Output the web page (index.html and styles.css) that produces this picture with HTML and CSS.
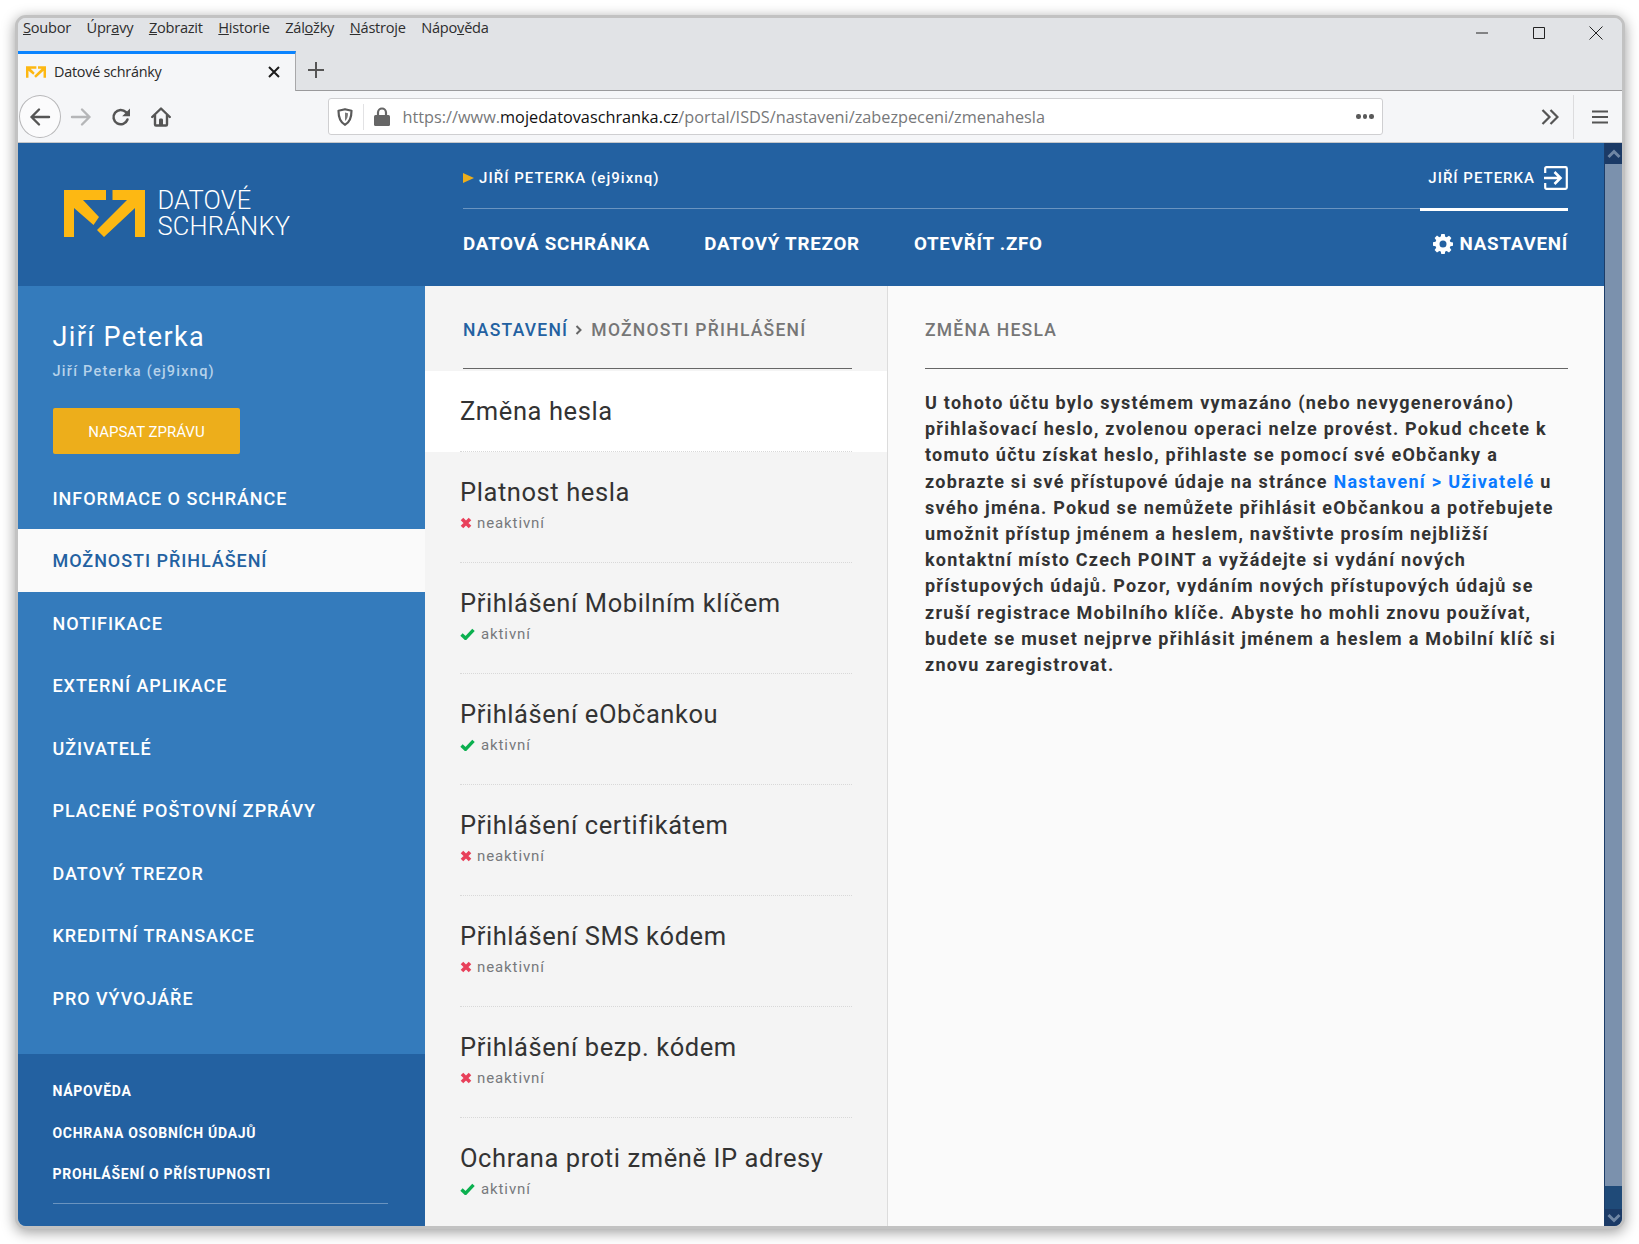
FILE: index.html
```html
<!DOCTYPE html>
<html lang="cs">
<head>
<meta charset="utf-8">
<title>Datové schránky</title>
<link rel="stylesheet" href="styles.css">
</head>
<body>
<div class="window">
  <div class="menubar">
    <nav class="menus">
      <span><u>S</u>oubor</span><span>Úpr<u>a</u>vy</span><span><u>Z</u>obrazit</span><span><u>H</u>istorie</span><span>Zál<u>o</u>žky</span><span><u>N</u>ástroje</span><span>Nápo<u>v</u>ěda</span>
    </nav>
    <div class="winctl">
      <svg width="14" height="14" viewBox="0 0 14 14"><path d="M1 7h12" stroke="#222" fill="none"/></svg>
      <svg width="14" height="14" viewBox="0 0 14 14"><path d="M1.500 1.500h11v11h-11z" stroke="#222" fill="none"/></svg>
      <svg width="14" height="14" viewBox="0 0 14 14"><path d="M.5.5l13 13M13.500.5l-13 13" stroke="#222" fill="none"/></svg>
    </div>
  </div>
  <div class="tabstrip">
    <div class="tab">
      <svg class="favicon" width="20" height="14" viewBox="0 0 81 47"><path d="M0 0H42V10H19L35 27 29.500 35 10 18V47H0ZM48.500 0H81V47H71V18L40 47 33 40 63 10H48.500Z" fill="#fdb813"/></svg>
      <span class="tabtitle">Datové schránky</span>
      <svg class="tabclose" width="14" height="14" viewBox="0 0 14 14"><path d="M2 2l10 10M12 2L2 12" stroke="#1c1c1c" stroke-width="2" fill="none"/></svg>
    </div>
    <svg class="newtab" width="18" height="18" viewBox="0 0 18 18"><path d="M9 1v16M1 9h16" stroke="#555" stroke-width="2" fill="none"/></svg>
  </div>
  <div class="toolbar">
    <div class="navbtns">
      <div class="backbtn"><svg width="22" height="20" viewBox="0 0 22 20"><path d="M20 10H2.500M10 2.500L2.500 10l7.500 7.500" stroke="#555" stroke-width="2.400" stroke-linecap="round" stroke-linejoin="round" fill="none"/></svg></div>
      <svg class="fwd" width="22" height="20" viewBox="0 0 22 20"><path d="M2 10h17.500M12 2.500l7.500 7.500-7.500 7.500" stroke="#b5b6b8" stroke-width="2.400" stroke-linecap="round" stroke-linejoin="round" fill="none"/></svg>
      <svg class="rel" width="20" height="20" viewBox="0 0 20 20"><path d="M16.500 12.500a7.200 7.200 0 1 1-1.500-7.300" stroke="#555" stroke-width="2.500" stroke-linecap="round" fill="none"/><path d="M19 1.500v7.800h-7.800z" fill="#555"/></svg>
      <svg class="hom" width="20" height="20" viewBox="0 0 20 20"><path d="M1.200 10L10 1.500 18.800 10M4 8v9.500q0 1 1 1h10q1 0 1-1V8" stroke="#555" stroke-width="2.400" stroke-linecap="round" stroke-linejoin="round" fill="none"/><path d="M8 18v-5q0-1.500 1-1.500h2q1 0 1 1.500v5z" fill="#555"/></svg>
    </div>
    <div class="urlbar">
      <svg class="shield" width="16" height="18" viewBox="0 0 16 18"><path d="M8 1.200l6.500 1.600c0 7-1.500 11.500-6.500 14C3 14.300 1.500 9.800 1.500 2.800z" stroke="#5a5a5a" stroke-width="2.200" stroke-linejoin="round" fill="none"/><path d="M8 4.500l3 .8c0 3.500-.8 6-3 7.700z" fill="#7a7a7a"/></svg>
      <i class="sep"></i>
      <svg class="lock" width="16" height="19" viewBox="0 0 16 19"><path d="M4 9V5.500a4 4 0 0 1 8 0V9" stroke="#666" stroke-width="2.200" fill="none"/><rect y="8" width="16" height="11" rx="1.500" fill="#666"/></svg>
      <span class="url">https://www.<b>mojedatovaschranka.cz</b>/portal/ISDS/nastaveni/zabezpeceni/zmenahesla</span>
      <span class="dots"><i></i><i></i><i></i></span>
    </div>
    <svg class="more" width="18" height="16" viewBox="0 0 18 16"><path d="M1.500 1l7 7-7 7M9.500 1l7 7-7 7" stroke="#555" stroke-width="2.200" fill="none"/></svg>
    <i class="sep tallsep"></i>
    <svg class="burger" width="16" height="14" viewBox="0 0 16 14"><path d="M0 1.500h16M0 7h16M0 12.500h16" stroke="#555" stroke-width="2" fill="none"/></svg>
  </div>

  <div class="viewport">
    <div class="page">
      <header class="hdr">
        <div class="logo">
          <svg width="81" height="47" viewBox="0 0 81 47"><path d="M0 0H42V10H19L35 27 29.500 35 10 18V47H0ZM48.500 0H81V47H71V18L40 47 33 40 63 10H48.500Z" fill="#fdb813"/></svg>
          <div class="logotext">DATOVÉ<br>SCHRÁNKY</div>
        </div>
        <div class="hdrmain">
          <div class="hdrtop">
            <span class="crumbuser"><i class="tri"></i>JIŘÍ PETERKA (ej9ixnq)</span>
            <span class="logout">JIŘÍ PETERKA
              <svg width="24" height="24" viewBox="0 0 24 24"><path d="M1.200 7V2.500q0-1.300 1.300-1.300h19q1.300 0 1.300 1.300v19q0 1.300-1.300 1.300h-19q-1.300 0-1.300-1.300V17" stroke="#fff" stroke-width="2.200" fill="none"/><path d="M0 12h16M10.500 6l6 6-6 6" stroke="#fff" stroke-width="2.600" fill="none"/></svg>
            </span>
          </div>
          <nav class="hdrnav">
            <a>DATOVÁ SCHRÁNKA</a><a>DATOVÝ TREZOR</a><a>OTEVŘÍT .ZFO</a>
            <a class="settings">
              <svg width="20" height="20" viewBox="0 0 20 20"><path fill="#fff" fill-rule="evenodd" d="M8.300 0h3.400l.5 2.700 1.500.6 2.300-1.600 2.400 2.400-1.600 2.300.6 1.500 2.700.5v3.400l-2.700.5-.6 1.500 1.600 2.300-2.400 2.400-2.300-1.600-1.500.6-.5 2.700H8.300l-.5-2.700-1.500-.6L4 18.400 1.600 16l1.600-2.300-.6-1.500L0 11.700V8.300l2.600-.5.6-1.500-1.600-2.300L4 1.600l2.300 1.600 1.500-.6zM10 6.500a3.500 3.500 0 1 0 0 7 3.500 3.500 0 0 0 0-7z"/></svg>
              NASTAVENÍ</a>
          </nav>
        </div>
      </header>
      <div class="cols">
        <aside class="side">
          <div class="sidetop">
            <div class="uname">Jiří Peterka</div>
            <div class="usub">Jiří Peterka (ej9ixnq)</div>
            <div class="compose">NAPSAT ZPRÁVU</div>
          </div>
          <ul class="sidenav">
            <li>INFORMACE O SCHRÁNCE</li>
            <li class="on">MOŽNOSTI PŘIHLÁŠENÍ</li>
            <li>NOTIFIKACE</li>
            <li>EXTERNÍ APLIKACE</li>
            <li>UŽIVATELÉ</li>
            <li>PLACENÉ POŠTOVNÍ ZPRÁVY</li>
            <li>DATOVÝ TREZOR</li>
            <li>KREDITNÍ TRANSAKCE</li>
            <li>PRO VÝVOJÁŘE</li>
          </ul>
          <div class="sidefoot">
            <a>NÁPOVĚDA</a><a>OCHRANA OSOBNÍCH ÚDAJŮ</a><a>PROHLÁŠENÍ O PŘÍSTUPNOSTI</a>
          </div>
        </aside>
        <section class="list">
          <div class="sechead"><div class="sectitle"><a>NASTAVENÍ</a><svg class="chev" width="8" height="10" viewBox="0 0 8 10"><path d="M1.500 1l4 4-4 4" stroke="#666" stroke-width="2" fill="none"/></svg><span>MOŽNOSTI PŘIHLÁŠENÍ</span></div></div>
          <div class="row cur"><div class="rtitle">Změna hesla</div></div>
          <div class="row"><div class="rtitle">Platnost hesla</div><div class="st"><svg class="xi" width="12" height="12" viewBox="0 0 12 12"><path d="M2 2l8 8M10 2l-8 8" stroke="#e8405a" stroke-width="3.600" fill="none"/></svg>neaktivní</div></div>
          <div class="row"><div class="rtitle">Přihlášení Mobilním klíčem</div><div class="st"><svg class="ok" width="15" height="12" viewBox="0 0 15 12"><path d="M1.500 6.500L5.500 10.300 13.500 1.800" stroke="#0bb04f" stroke-width="3.400" fill="none"/></svg>aktivní</div></div>
          <div class="row"><div class="rtitle">Přihlášení eObčankou</div><div class="st"><svg class="ok" width="15" height="12" viewBox="0 0 15 12"><path d="M1.500 6.500L5.500 10.300 13.500 1.800" stroke="#0bb04f" stroke-width="3.400" fill="none"/></svg>aktivní</div></div>
          <div class="row"><div class="rtitle">Přihlášení certifikátem</div><div class="st"><svg class="xi" width="12" height="12" viewBox="0 0 12 12"><path d="M2 2l8 8M10 2l-8 8" stroke="#e8405a" stroke-width="3.600" fill="none"/></svg>neaktivní</div></div>
          <div class="row"><div class="rtitle">Přihlášení SMS kódem</div><div class="st"><svg class="xi" width="12" height="12" viewBox="0 0 12 12"><path d="M2 2l8 8M10 2l-8 8" stroke="#e8405a" stroke-width="3.600" fill="none"/></svg>neaktivní</div></div>
          <div class="row"><div class="rtitle">Přihlášení bezp. kódem</div><div class="st"><svg class="xi" width="12" height="12" viewBox="0 0 12 12"><path d="M2 2l8 8M10 2l-8 8" stroke="#e8405a" stroke-width="3.600" fill="none"/></svg>neaktivní</div></div>
          <div class="row"><div class="rtitle">Ochrana proti změně IP adresy</div><div class="st"><svg class="ok" width="15" height="12" viewBox="0 0 15 12"><path d="M1.500 6.500L5.500 10.300 13.500 1.800" stroke="#0bb04f" stroke-width="3.400" fill="none"/></svg>aktivní</div></div>
        </section>
        <section class="detail">
          <div class="sechead"><div class="sectitle"><span>ZMĚNA HESLA</span></div></div>
          <p class="msg">U tohoto účtu bylo systémem vymazáno (nebo nevygenerováno)<br>
přihlašovací heslo, zvolenou operaci nelze provést. Pokud chcete k<br>
tomuto účtu získat heslo, přihlaste se pomocí své eObčanky a<br>
zobrazte si své přístupové údaje na stránce <a>Nastavení &gt; Uživatelé</a> u<br>
svého jména. Pokud se nemůžete přihlásit eObčankou a potřebujete<br>
umožnit přístup jménem a heslem, navštivte prosím nejbližší<br>
kontaktní místo Czech POINT a vyžádejte si vydání nových<br>
přístupových údajů. Pozor, vydáním nových přístupových údajů se<br>
zruší registrace Mobilního klíče. Abyste ho mohli znovu používat,<br>
budete se muset nejprve přihlásit jménem a heslem a Mobilní klíč si<br>
znovu zaregistrovat.</p>
        </section>
      </div>
    </div>
    <div class="scrollbar">
      <div class="sbtn"><svg width="14" height="10" viewBox="0 0 14 10"><path d="M1.500 8L7 2.500 12.500 8" stroke="#6f86a4" stroke-width="3" fill="none"/></svg></div>
      <div class="sthumb"></div>
      <div class="strack"></div>
      <div class="sbtn down"><svg width="14" height="10" viewBox="0 0 14 10"><path d="M1.500 2L7 7.500 12.500 2" stroke="#6f86a4" stroke-width="3" fill="none"/></svg></div>
    </div>
  </div>
</div>
</body>
</html>
```
FILE: styles.css
```css
* { box-sizing: border-box; }
html, body { margin: 0; height: 100%; }
body { background: #fff; padding: 15px 14px 15px 15px; font-family: Roboto, sans-serif; overflow: hidden; }
ul { list-style: none; margin: 0; padding: 0; }
.window { height: 1214px; width: 1610px; border: 3px solid #c2c2c2; border-radius: 11px; box-shadow: 0 3px 14px rgba(0,0,0,.4); overflow: hidden; display: flex; flex-direction: column; background: #e1e3e6; }

.menubar { height: 33px; flex: none; display: flex; justify-content: space-between; background: #e1e3e6; }
.menus { display: flex; gap: 15.600px; padding: 0 0 0 5px; font: 14.600px/19px "Open Sans", sans-serif; letter-spacing: -.25px; color: #2e2e2e; height: 19px; }
.winctl { display: flex; gap: 43px; padding: 8px 19px 0 0; align-items: flex-start; }

.tabstrip { height: 40px; flex: none; display: flex; align-items: stretch; border-bottom: 1px solid #9a9a9c; }
.tab { width: 278px; height: 40px; background: #f5f6f8; border-top: 3px solid #0a84ff; border-right: 1px solid #a8a8aa; display: flex; align-items: center; padding: 0 14px 2px 8px; color: #2a2a2a; }
.favicon { margin-right: 8px; }
.tabtitle { flex: 1; font: 14.400px "Open Sans", sans-serif; letter-spacing: -.25px; }
.newtab { margin: 10px 0 0 11px; }

.toolbar { height: 52px; flex: none; display: flex; align-items: center; background: #f5f6f8; border-bottom: 1px solid #c6c7c9; }
.navbtns { display: flex; align-items: center; width: 310px; padding-left: 1px; }
.backbtn { width: 42px; height: 43px; border: 1px solid #b8b8ba; border-radius: 50%; display: flex; align-items: center; justify-content: center; background: #fbfbfc; }
.fwd { margin-left: 9px; }
.rel { margin-left: 19px; }
.hom { margin-left: 20px; }
.urlbar { width: 1054.500px; height: 37px; background: #fff; border: 1px solid #cfcfd1; border-radius: 3px; display: flex; align-items: center; padding: 0 8px 0 8px; }
.shield { flex: none; }
.sep { width: 1px; height: 26px; background: #e2e2e4; margin-left: 10px; flex: none; }
.lock { margin: 0 13px 0 9.500px; flex: none; }
.url { flex: 1; font: 16.280px "Open Sans", sans-serif; letter-spacing: 0; color: #77787a; white-space: nowrap; }
.url b { font-weight: 400; color: #111; }
.dots { display: flex; gap: 2px; }
.dots i { width: 4.500px; height: 4.500px; border-radius: 50%; background: #5a5a5a; }
.more { margin-left: 158px; }
.tallsep { height: 44px; margin-left: 14px; background: #dcdcde; }
.burger { margin-left: 18px; }

.viewport { flex: 1; min-height: 0; display: flex; }
.page { flex: 1; min-width: 0; display: flex; flex-direction: column; background: #fafafa; }
.scrollbar { width: 18px; flex: none; display: flex; flex-direction: column; border-left: 1px solid #1c3d69; background: #20497a; }
.sbtn { height: 21px; background: #1b3a66; display: flex; align-items: center; justify-content: center; }
.sbtn.down { height: 17px; }
.sthumb { height: 1022px; background: #7b91ad; }
.strack { flex: 1; background: #1f4a78; }

.hdr { height: 143px; flex: none; display: flex; background: #2361a1; color: #fff; }
.logo { width: 445px; flex: none; display: flex; align-items: flex-start; padding: 47px 0 0 46px; }
.logotext { margin: -3px 0 0 12.500px; font-size: 25.500px; line-height: 26px; font-weight: 300; letter-spacing: .15px; }
.hdrmain { flex: 1; padding-right: 36px; display: flex; flex-direction: column; }
.hdrtop { height: 66px; display: flex; justify-content: space-between; align-items: flex-end; border-bottom: 1px solid #6a94c0; position: relative; padding-bottom: 22px; }
.hdrtop::after { content: ""; position: absolute; right: 0; bottom: -3px; width: 148px; height: 3px; background: #fff; }
.crumbuser { font-size: 15px; font-weight: 500; letter-spacing: 1.050px; display: flex; align-items: center; margin-bottom: -1px; }
.tri { width: 0; height: 0; border-left: 11px solid #edae1b; border-top: 5px solid transparent; border-bottom: 5px solid transparent; margin-right: 5px; }
.logout { font-size: 15px; font-weight: 500; letter-spacing: 1px; display: flex; align-items: center; gap: 9px; margin-bottom: -4px; margin-top: -4px; }
.hdrnav { flex: 1; display: flex; align-items: center; gap: 54px; font-size: 18.800px; font-weight: 700; letter-spacing: .74px; padding-bottom: 7px; }
.settings { margin-left: auto; display: flex; align-items: center; gap: 7px; }

.cols { flex: 1; min-height: 0; display: flex; }
.side { width: 407px; flex: none; display: flex; flex-direction: column; background: #347bbc; color: #fff; }
.sidetop { padding: 0 35px 0 34.500px; height: 180.500px; }
.uname { font-size: 27px; letter-spacing: 1.400px; line-height: 32px; padding-top: 35px; }
.usub { font-size: 14.500px; font-weight: 500; letter-spacing: 1.250px; color: #b6d2ea; line-height: 20px; margin-top: 9px; }
.compose { width: 187px; height: 46px; margin-top: 26px; background: #edae1b; border-radius: 2px; display: flex; align-items: center; justify-content: center; font-size: 15px; padding-top: 1px; margin-left: .5px; }
.sidenav { margin-bottom: 25px; }
.sidenav li { height: 62.500px; line-height: 63px; padding: 0 35px 0 34.500px; font-size: 18px; font-weight: 500; letter-spacing: .95px; }
.sidenav li.on { background: #fafafa; color: #2361a1; }
.sidefoot { flex: 1; background: #2361a1; padding: 17px 35px 0 34.500px; display: flex; flex-direction: column; position: relative; }
.sidefoot::after { content: ""; position: absolute; left: 35px; top: 149px; width: 335px; height: 1px; background: #6a94c0; }
.sidefoot a { height: 41.700px; line-height: 41.700px; font-size: 14px; font-weight: 700; letter-spacing: .72px; }

.list { width: 463px; flex: none; background: #f4f4f4; border-right: 1px solid #dcdcdc; overflow: hidden; }
.sechead { height: 85px; padding: 0 35px 0 38px; }
.detail .sechead { padding: 0 36px 0 37px; }
.sectitle { height: 83px; border-bottom: 1px solid #666; display: flex; align-items: center; gap: 7px; font-size: 17.500px; font-weight: 500; letter-spacing: 1.250px; color: #767676; padding-top: 5px; }
.sectitle a { color: #2361a1; }
.chev { margin: 0 1px 0 0; }
.row { height: 111px; padding: 0 35px; position: relative; }
.row::after { content: ""; position: absolute; left: 35px; right: 35px; bottom: 0; border-bottom: 1px dotted #d8d8d8; }
.row.cur { height: 81px; background: #fff; }
.rtitle { font-size: 25.500px; line-height: 32px; padding-top: 24px; letter-spacing: .58px; color: #333; }
.st { display: flex; align-items: center; font-size: 15px; letter-spacing: .9px; color: #77797c; height: 22px; margin-top: 4px; }
.xi { margin-right: 5px; }
.ok { margin-right: 6px; }

.detail { flex: 1; min-width: 0; background: #fafafa; }
.msg { margin: 19px 36px 0 37px; font-size: 18px; line-height: 26.200px; font-weight: 700; letter-spacing: 1.240px; color: #333; white-space: nowrap; }
.msg a { color: #0b7bff; letter-spacing: 1.300px; }
```
